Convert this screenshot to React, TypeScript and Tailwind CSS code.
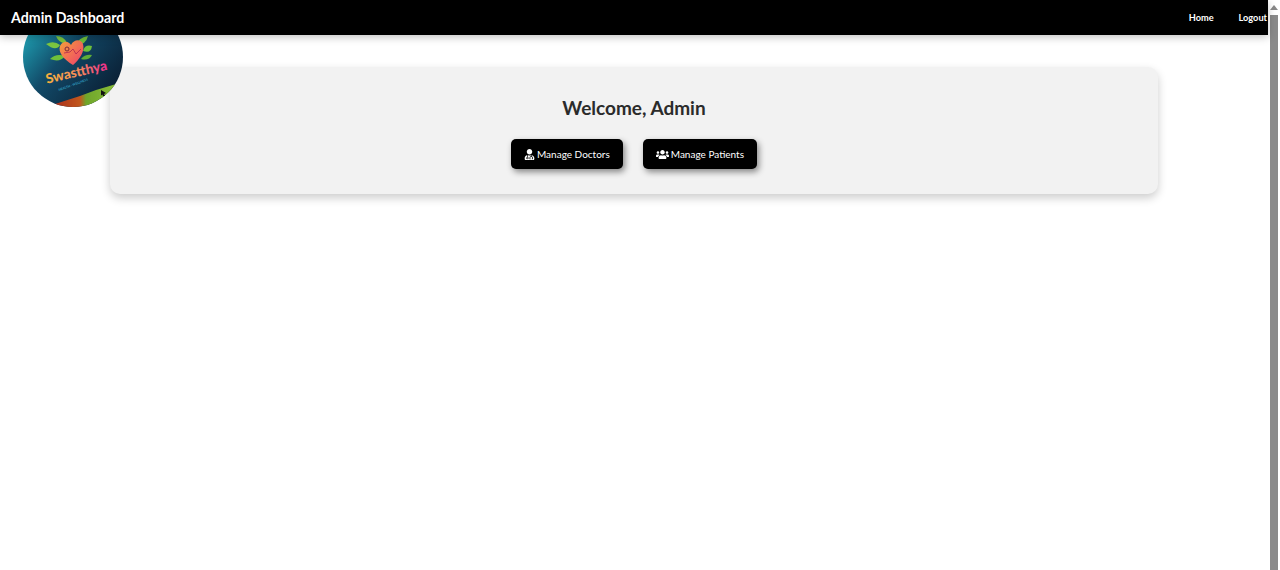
import { FaUserMd, FaUsers } from 'react-icons/fa';

function Logo() {
  return (
    <svg viewBox="0 0 100 100" className="h-[100px] w-[100px]">
      <defs>
        <clipPath id="logo-clip">
          <circle cx="50" cy="50" r="50" />
        </clipPath>
        <linearGradient id="logo-bg" x1="0" y1="0.25" x2="0.8" y2="0.9">
          <stop offset="0" stopColor="#1fa3b5" />
          <stop offset="0.45" stopColor="#124a68" />
          <stop offset="1" stopColor="#0b2238" />
        </linearGradient>
        <linearGradient id="logo-text" x1="0" y1="0" x2="1" y2="0">
          <stop offset="0" stopColor="#f5b13d" />
          <stop offset="0.55" stopColor="#f58a5a" />
          <stop offset="1" stopColor="#ee2d8f" />
        </linearGradient>
        <linearGradient id="logo-heart" x1="0" y1="0" x2="1" y2="1">
          <stop offset="0" stopColor="#f7a33a" />
          <stop offset="1" stopColor="#ee3e6d" />
        </linearGradient>
        <linearGradient id="logo-ground" x1="0" y1="0" x2="1" y2="0">
          <stop offset="0" stopColor="#a3271f" />
          <stop offset="0.42" stopColor="#c2571f" />
          <stop offset="0.5" stopColor="#6fa52b" />
          <stop offset="1" stopColor="#8fc53a" />
        </linearGradient>
        <filter id="logo-soft">
          <feGaussianBlur stdDeviation="0.5" />
        </filter>
      </defs>
      <g clipPath="url(#logo-clip)">
        <rect width="100" height="100" fill="url(#logo-bg)" />
        <path d="M26 100 L32 97 L57 89 L73 83 L100 75 L100 100 Z" fill="url(#logo-ground)" filter="url(#logo-soft)" />
      </g>
      <path d="M23 37 Q31 33 37 38 Q33 45 23 37 Z" fill="#7cc63f" />
      <path d="M27 52 Q33 46 42 49 Q37 56 27 52 Z" fill="#6fbf3a" />
      <path d="M60 44 Q62 37 69 39 Q68 47 60 44 Z" fill="#6fbf3a" />
      <path d="M58 52 Q62 47 69 48 Q66 54 58 52 Z" fill="#5fae37" />
      <path d="M33 29 Q41 29 44 36 Q36 37 33 29 Z" fill="#7cc63f" />
      <path d="M53 38 Q55 31 65 29 Q63 38 53 38 Z" fill="#6fbf3a" />
      <path
        d="M50 58 C40 52 35 45 37 39 C40 33 46 34 48 38 C51 32 58 32 60 37 C62 44 57 52 50 58 Z"
        fill="url(#logo-heart)"
      />
      <circle cx="44" cy="42" r="2" fill="none" stroke="#7a2a3a" strokeWidth="1" />
      <path d="M41 46 L47 45 L50 42 L53 47 L58 42" fill="none" stroke="#b3264f" strokeWidth="0.8" />
      <text
        x="24"
        y="76.7"
        fontFamily="Lato, sans-serif"
        fontWeight="900"
        fontSize="13.6"
        fill="url(#logo-text)"
        transform="rotate(-13 24 76.7)"
      >
        Swastthya
      </text>
      <text
        x="36"
        y="84"
        fontFamily="Lato, sans-serif"
        fontWeight="700"
        fontSize="3.2"
        fill="#2f9fc0"
        transform="rotate(-20 36 84)"
      >
        HEALTH · WELLNESS
      </text>
      <path d="M78 83 L83 86 L81 87 L82 89 L80 89 L79.5 87.5 L78 88.5 Z" fill="#111" />
    </svg>
  );
}

function ActionButton({ icon, label }: { icon: React.ReactNode; label: string }) {
  return (
    <button className="flex h-[30px] items-center gap-[2px] rounded-[5px] bg-black px-[13px] pt-[1px] text-[10px] text-white shadow-[2px_3px_6px_rgba(0,0,0,0.45)]">
      {icon}
      {label}
    </button>
  );
}

export default function App() {
  return (
    <div className="flex h-screen overflow-hidden bg-white font-['Lato',sans-serif]">
      <div className="relative min-w-0 flex-1">
        <nav className="relative z-20 flex h-[35px] items-center justify-between overflow-hidden bg-black pl-[11px] text-white shadow-[0_2px_8px_rgba(0,0,0,0.25)]">
          <span className="text-[14.2px] font-bold">Admin Dashboard</span>
          <div className="flex gap-[25px] pt-[1px] pr-[1px] text-[9.2px] font-bold">
            <a>Home</a>
            <a>Logout</a>
          </div>
        </nav>

        <div className="absolute top-[7px] left-[23px] z-10">
          <Logo />
        </div>

        <main className="relative mx-auto mt-[32px] flex h-[127px] w-[1048px] flex-col items-center rounded-[10px] bg-[#f2f2f2] pt-[29px] shadow-[0_4px_10px_rgba(0,0,0,0.2)]">
          <h1 className="text-[19px] leading-[24px] font-bold text-[#2b2b2b]">Welcome, Admin</h1>
          <div className="mt-[19px] flex gap-[20px]">
            <ActionButton icon={<FaUserMd className="h-[11px] w-[11px]" />} label="Manage Doctors" />
            <ActionButton icon={<FaUsers className="h-[13px] w-[13px]" />} label="Manage Patients" />
          </div>
        </main>
      </div>

      <aside className="flex w-[12px] flex-col items-center bg-white pt-[5px]">
        <div className="h-0 w-0 border-x-[4px] border-b-[5px] border-x-transparent border-b-[#888]" />
        <div className="mt-[5px] w-[8px] flex-1 bg-[#8a8a8a]" />
      </aside>
    </div>
  );
}
